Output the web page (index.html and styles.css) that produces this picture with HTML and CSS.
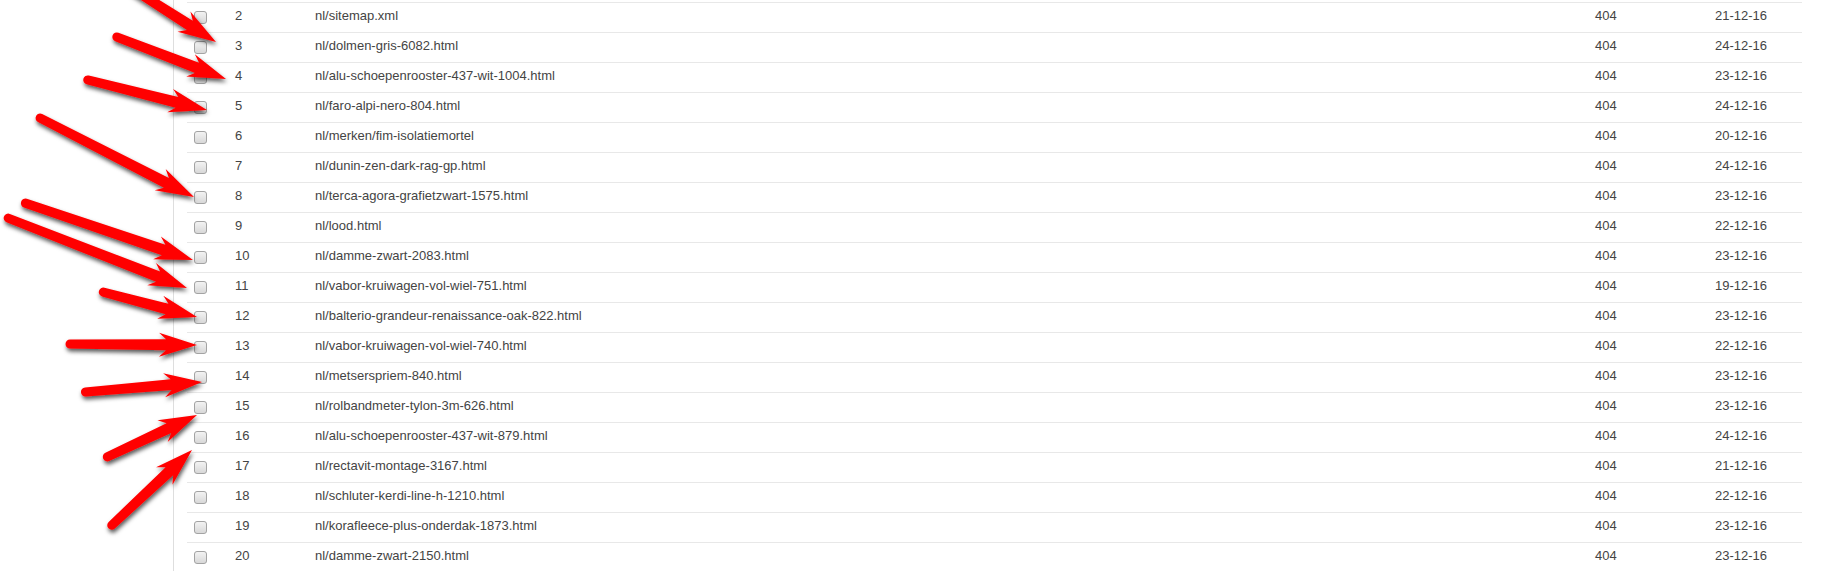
FILE: index.html
```html
<!DOCTYPE html>
<html lang="nl">
<head>
    <meta charset="UTF-8">
    <title>404 overzicht</title>
    <link rel="stylesheet" href="styles.css">
</head>
<body>

<div id="page">
    <div class="sidebar"></div>
    <div class="content">
        <table class="log-table">
            <colgroup>
                <col class="col-check">
                <col class="col-nr">
                <col>
                <col class="col-code">
                <col class="col-date">
            </colgroup>
            <tbody>
                <tr><td class="check"><input type="checkbox"></td><td>2</td><td>nl/sitemap.xml</td><td>404</td><td>21-12-16</td></tr>
                <tr><td class="check"><input type="checkbox"></td><td>3</td><td>nl/dolmen-gris-6082.html</td><td>404</td><td>24-12-16</td></tr>
                <tr><td class="check"><input type="checkbox"></td><td>4</td><td>nl/alu-schoepenrooster-437-wit-1004.html</td><td>404</td><td>23-12-16</td></tr>
                <tr><td class="check"><input type="checkbox"></td><td>5</td><td>nl/faro-alpi-nero-804.html</td><td>404</td><td>24-12-16</td></tr>
                <tr><td class="check"><input type="checkbox"></td><td>6</td><td>nl/merken/fim-isolatiemortel</td><td>404</td><td>20-12-16</td></tr>
                <tr><td class="check"><input type="checkbox"></td><td>7</td><td>nl/dunin-zen-dark-rag-gp.html</td><td>404</td><td>24-12-16</td></tr>
                <tr><td class="check"><input type="checkbox"></td><td>8</td><td>nl/terca-agora-grafietzwart-1575.html</td><td>404</td><td>23-12-16</td></tr>
                <tr><td class="check"><input type="checkbox"></td><td>9</td><td>nl/lood.html</td><td>404</td><td>22-12-16</td></tr>
                <tr><td class="check"><input type="checkbox"></td><td>10</td><td>nl/damme-zwart-2083.html</td><td>404</td><td>23-12-16</td></tr>
                <tr><td class="check"><input type="checkbox"></td><td>11</td><td>nl/vabor-kruiwagen-vol-wiel-751.html</td><td>404</td><td>19-12-16</td></tr>
                <tr><td class="check"><input type="checkbox"></td><td>12</td><td>nl/balterio-grandeur-renaissance-oak-822.html</td><td>404</td><td>23-12-16</td></tr>
                <tr><td class="check"><input type="checkbox"></td><td>13</td><td>nl/vabor-kruiwagen-vol-wiel-740.html</td><td>404</td><td>22-12-16</td></tr>
                <tr><td class="check"><input type="checkbox"></td><td>14</td><td>nl/metserspriem-840.html</td><td>404</td><td>23-12-16</td></tr>
                <tr><td class="check"><input type="checkbox"></td><td>15</td><td>nl/rolbandmeter-tylon-3m-626.html</td><td>404</td><td>23-12-16</td></tr>
                <tr><td class="check"><input type="checkbox"></td><td>16</td><td>nl/alu-schoepenrooster-437-wit-879.html</td><td>404</td><td>24-12-16</td></tr>
                <tr><td class="check"><input type="checkbox"></td><td>17</td><td>nl/rectavit-montage-3167.html</td><td>404</td><td>21-12-16</td></tr>
                <tr><td class="check"><input type="checkbox"></td><td>18</td><td>nl/schluter-kerdi-line-h-1210.html</td><td>404</td><td>22-12-16</td></tr>
                <tr><td class="check"><input type="checkbox"></td><td>19</td><td>nl/korafleece-plus-onderdak-1873.html</td><td>404</td><td>23-12-16</td></tr>
                <tr><td class="check"><input type="checkbox"></td><td>20</td><td>nl/damme-zwart-2150.html</td><td>404</td><td>23-12-16</td></tr>
            </tbody>
        </table>
    </div>
</div>

<!-- annotatie-pijlen over de tabel -->
<svg class="arrows" width="1836" height="571" viewBox="0 0 1836 571">
    <defs>
        <filter id="shadow" x="-20%" y="-50%" width="140%" height="200%">
            <feDropShadow dx="1" dy="3" stdDeviation="2.2" flood-color="#000" flood-opacity="0.65"/>
        </filter>
    </defs>
    <g class="arrow" filter="url(#shadow)">
        <g transform="translate(216 42) rotate(32.47)"><path d="M0 0 L-38 -12 L-31 -5.5 L-115 -4.5 A4.5 4.5 0 0 0 -115 4.5 L-31 5.5 L-38 12 Z"/></g>
        <g transform="translate(226 79) rotate(21.07)"><path d="M0 0 L-38 -12 L-31 -5.5 L-117 -4.5 A4.5 4.5 0 0 0 -117 4.5 L-31 5.5 L-38 12 Z"/></g>
        <g transform="translate(207 110) rotate(14.15)"><path d="M0 0 L-38 -12 L-31 -5.5 L-123 -4.5 A4.5 4.5 0 0 0 -123 4.5 L-31 5.5 L-38 12 Z"/></g>
        <g transform="translate(194 197) rotate(27.16)"><path d="M0 0 L-38 -12 L-31 -5.5 L-173 -4.5 A4.5 4.5 0 0 0 -173 4.5 L-31 5.5 L-38 12 Z"/></g>
        <g transform="translate(193 260) rotate(18.74)"><path d="M0 0 L-38 -12 L-31 -5.5 L-177 -4.5 A4.5 4.5 0 0 0 -177 4.5 L-31 5.5 L-38 12 Z"/></g>
        <g transform="translate(187 288) rotate(21.36)"><path d="M0 0 L-38 -12 L-31 -5.5 L-192 -4.5 A4.5 4.5 0 0 0 -192 4.5 L-31 5.5 L-38 12 Z"/></g>
        <g transform="translate(197 317) rotate(14.89)"><path d="M0 0 L-38 -12 L-31 -5.5 L-97 -4.5 A4.5 4.5 0 0 0 -97 4.5 L-31 5.5 L-38 12 Z"/></g>
        <g transform="translate(197 345) rotate(0.45)"><path d="M0 0 L-38 -12 L-31 -5.5 L-127 -4.5 A4.5 4.5 0 0 0 -127 4.5 L-31 5.5 L-38 12 Z"/></g>
        <g transform="translate(202 382) rotate(-4.89)"><path d="M0 0 L-38 -12 L-31 -5.5 L-117 -4.5 A4.5 4.5 0 0 0 -117 4.5 L-31 5.5 L-38 12 Z"/></g>
        <g transform="translate(197 415) rotate(-25.02)"><path d="M0 0 L-38 -12 L-31 -5.5 L-99 -4.5 A4.5 4.5 0 0 0 -99 4.5 L-31 5.5 L-38 12 Z"/></g>
        <g transform="translate(192 450) rotate(-43.15)"><path d="M0 0 L-38 -12 L-31 -5.5 L-110 -4.5 A4.5 4.5 0 0 0 -110 4.5 L-31 5.5 L-38 12 Z"/></g>
    </g>
</svg>

</body>
</html>
```

FILE: styles.css
```css
body {
    margin: 0;
    padding: 0;
    background: #fff;
    font-family: 'Liberation Sans', Arial, sans-serif;
    font-size: 13px;
    color: #444;
    overflow: hidden;
}

#page {
    display: flex;
    min-height: 100vh;
}

.sidebar {
    width: 173px;
    flex: none;
    border-right: 1px solid #dedede;
}

.content {
    padding: 2px 0 0 13px;
}

.log-table {
    width: 1615px;
    border-collapse: collapse;
    table-layout: fixed;
}

.col-check {
    width: 40px;
}

.col-nr {
    width: 80px;
}

.col-code {
    width: 120px;
}

.col-date {
    width: 95px;
}

.log-table td {
    border-top: 1px solid #e8e8e8;
    padding: 5px 8px 8px;
    line-height: 16px;
    white-space: nowrap;
}

.log-table td.check {
    padding-left: 7px;
}

.log-table input[type="checkbox"] {
    -webkit-appearance: none;
    appearance: none;
    display: block;
    box-sizing: border-box;
    width: 13px;
    height: 13px;
    margin: 3px 0 0;
    border: 1px solid #a3a3a3;
    border-radius: 3px;
    background: linear-gradient(180deg, #f3f3f3, #d8d8d8);
}

.arrows {
    position: absolute;
    top: 0;
    left: 0;
    pointer-events: none;
}

.arrow {
    fill: #f00;
}
```
